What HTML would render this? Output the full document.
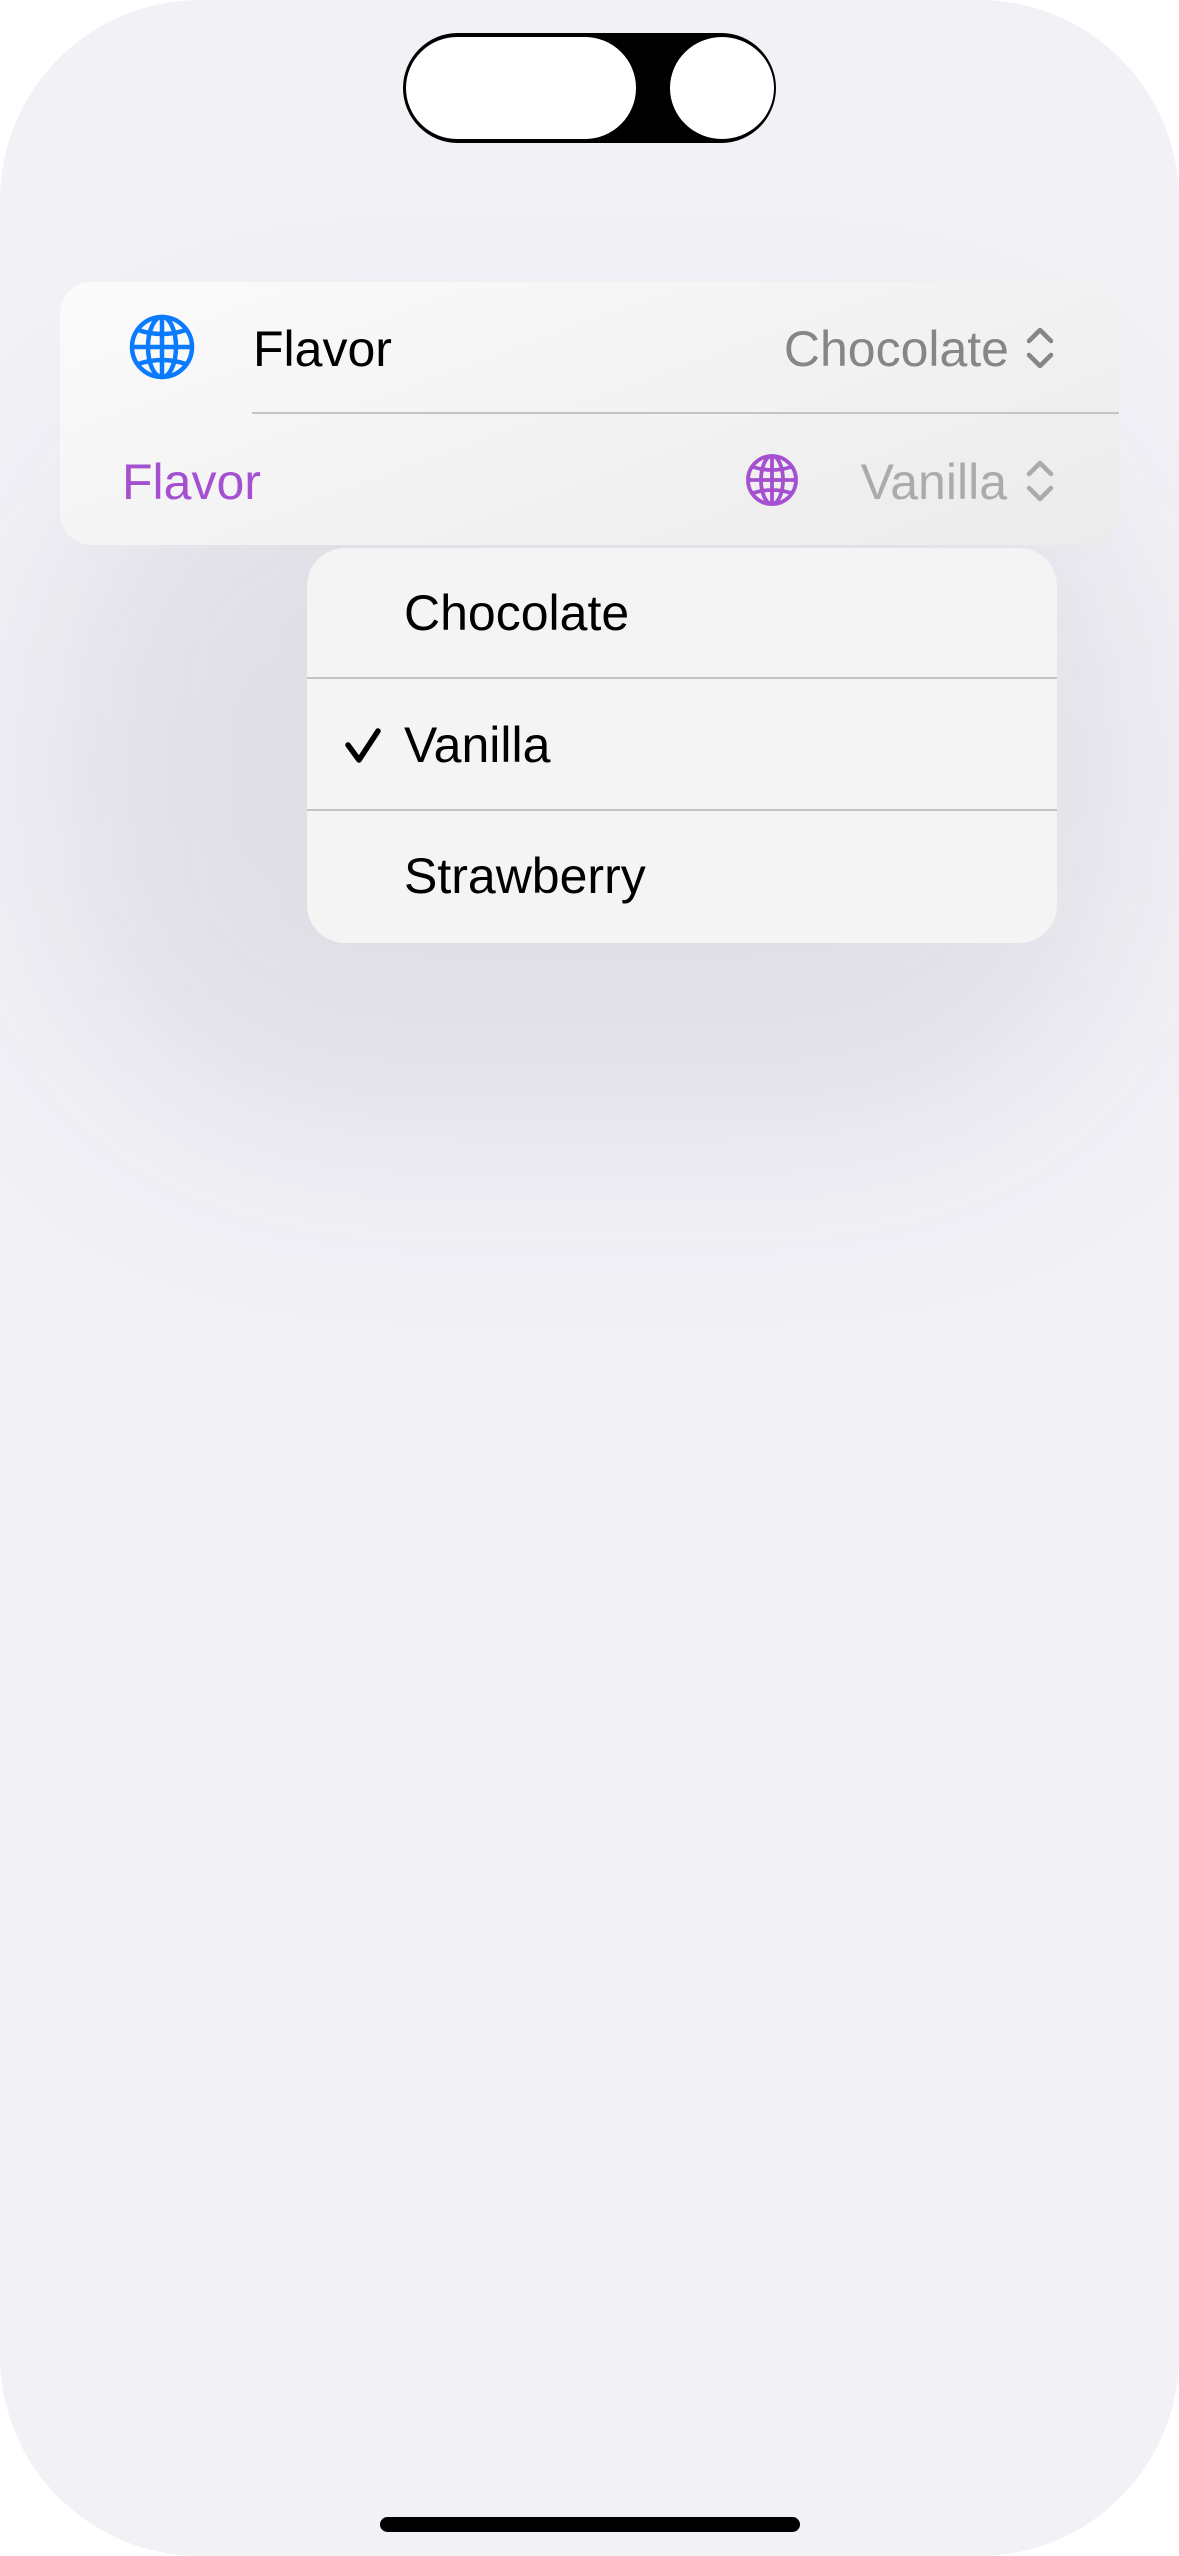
<!DOCTYPE html>
<html><head><meta charset="utf-8">
<style>
html,body{margin:0;padding:0;background:#fff;}
body{width:1179px;height:2556px;position:relative;overflow:hidden;font-family:"Liberation Sans",sans-serif;}
.screen{position:absolute;left:0;top:0;width:1179px;height:2556px;background:#f2f1f6;border-radius:200px;overflow:hidden;}
.shadow{position:absolute;left:70px;top:420px;width:1040px;height:700px;border-radius:260px;background:rgba(40,40,70,0.095);filter:blur(110px);}
.card{position:absolute;left:60px;top:282px;width:1059px;height:263px;border-radius:32px;background:linear-gradient(160deg,#fbfbfb 0%,#f3f3f3 50%,#ebebeb 100%);}
.menu{position:absolute;left:307px;top:548px;width:750px;height:395px;border-radius:38px;background:#f4f4f5;overflow:hidden;}
svg{position:absolute;left:0;top:0;}
</style></head><body>
<div class="screen">
<div class="shadow"></div>
<div class="card"></div>
<div class="menu"></div>
</div>
<svg width="1179" height="2556" viewBox="0 0 1179 2556" font-family="Liberation Sans, sans-serif">
  <rect x="403" y="33" width="373" height="110" rx="55" fill="#000"/>
  <rect x="406" y="37" width="230" height="102" rx="51" fill="#fff"/>
  <ellipse cx="722" cy="88" rx="52" ry="51" fill="#fff"/>
  <rect x="252" y="412" width="867" height="2" fill="#c4c4c6"/>
  <g fill="none" stroke="#0a7aff" stroke-width="4.5">
    <circle cx="162" cy="347" r="30"/>
    <ellipse cx="162" cy="347" rx="14" ry="30"/>
    <line x1="162" y1="317" x2="162" y2="377"/>
    <line x1="132" y1="347" x2="192" y2="347"/>
    <path d="M138 330 Q162 338 186 330"/>
    <path d="M138 364 Q162 356 186 364"/>
  </g>
  <text x="253" y="366" font-size="50" fill="#000">Flavor</text>
  <text x="1009" y="366" font-size="50" fill="#868689" text-anchor="end">Chocolate</text>
  <g fill="none" stroke="#868689" stroke-width="4.5" stroke-linecap="round" stroke-linejoin="round">
    <path d="M1029 341 L1040 330 L1051 341"/>
    <path d="M1029 355 L1040 366 L1051 355"/>
  </g>
  <text x="122" y="499" font-size="50" fill="#a54fd1">Flavor</text>
  <g fill="none" stroke="#a54fd1" stroke-width="3.8">
    <circle cx="772" cy="480" r="24"/>
    <ellipse cx="772" cy="480" rx="11" ry="24"/>
    <line x1="772" y1="456" x2="772" y2="504"/>
    <line x1="748" y1="480" x2="796" y2="480"/>
    <path d="M753 467 Q772 473 791 467"/>
    <path d="M753 493 Q772 487 791 493"/>
  </g>
  <text x="1007" y="499" font-size="50" fill="#ababad" text-anchor="end">Vanilla</text>
  <g fill="none" stroke="#ababad" stroke-width="4.5" stroke-linecap="round" stroke-linejoin="round">
    <path d="M1029 474 L1040 463 L1051 474"/>
    <path d="M1029 488 L1040 499 L1051 488"/>
  </g>
  <rect x="307" y="677" width="750" height="2" fill="#c4c4c6"/>
  <rect x="307" y="809" width="750" height="2" fill="#c4c4c6"/>
  <text x="404" y="630" font-size="50" fill="#000">Chocolate</text>
  <path d="M348 745 L359 760 L378 731" fill="none" stroke="#000" stroke-width="5.5" stroke-linecap="round" stroke-linejoin="round"/>
  <text x="404" y="762" font-size="50" fill="#000">Vanilla</text>
  <text x="404" y="893" font-size="50" fill="#000">Strawberry</text>
  <rect x="380" y="2517" width="420" height="15" rx="7.5" fill="#000"/>
</svg>
</body></html>
